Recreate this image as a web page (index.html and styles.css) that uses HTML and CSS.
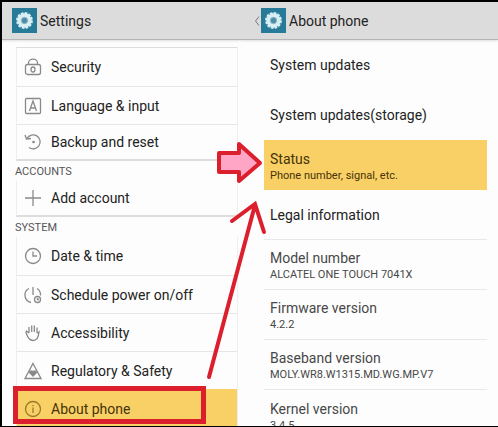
FILE: index.html
```html
<!DOCTYPE html>
<html lang="en">
<head>
  <meta charset="UTF-8">
  <meta name="viewport" content="width=device-width, initial-scale=1">
  <title>Settings - About phone</title>
  <link rel="stylesheet" href="styles.css">
</head>
<body>

  <svg class="defs" width="0" height="0" aria-hidden="true">
    <symbol id="gear" viewBox="0 0 25 25">
      <rect width="25" height="25" fill="#277b98"/>
      <circle cx="12.5" cy="12.5" r="7.2" fill="#d9eff5"/>
      <circle cx="12.5" cy="12.5" r="7.4" fill="none" stroke="#d9eff5" stroke-width="2" stroke-dasharray="2.7 1.17"/>
      <circle cx="12.5" cy="12.5" r="3.2" fill="#4d8da3" stroke="#8fbccb"/>
    </symbol>
  </svg>

  <main class="screens">
    <section class="screen">
      <header class="bar">
        <svg class="logo"><use href="#gear"/></svg>
        <h1>Settings</h1>
      </header>

      <nav class="settings">
        <div class="group group-top">
          <a class="row" href="#">
            <svg class="icon" viewBox="0 0 18 18"><rect x="1.5" y="6.5" width="15" height="10" rx="2"/><path d="M4.5 6.500V5a4.500 3.800 0 0 1 9 0v1.500"/><ellipse cx="9" cy="11.500" rx="2" ry="2.500"/></svg>
            <span>Security</span>
          </a>
          <a class="row" href="#">
            <svg class="icon" viewBox="0 0 18 18"><rect x="1.500" y="1.500" width="15" height="15" rx="1"/><path d="M5.500 14L9 4l3.500 10M6.500 11h5"/></svg>
            <span>Language &amp; input</span>
          </a>
          <a class="row" href="#">
            <svg class="icon" viewBox="0 0 18 18"><path d="M3 5.500A7 7 0 1 1 5 14.500M1 2l1.500 4 4.500-.5"/><circle class="fill" cx="9.500" cy="9" r=".7"/></svg>
            <span>Backup and reset</span>
          </a>
        </div>

        <h2>ACCOUNTS</h2>
        <div class="group">
          <a class="row" href="#">
            <svg class="icon" viewBox="0 0 18 18"><path d="M9 1v16M1 9h16"/></svg>
            <span>Add account</span>
          </a>
        </div>

        <h2>SYSTEM</h2>
        <div class="group">
          <a class="row" href="#">
            <svg class="icon" viewBox="0 0 18 18"><circle cx="9" cy="9" r="7.500"/><path d="M9 4.500V9h4"/></svg>
            <span>Date &amp; time</span>
          </a>
          <a class="row" href="#">
            <svg class="icon" viewBox="0 0 18 18"><path d="M9 1v8M5 2.500A7.500 7.500 0 0 0 7 16.500M13 2.500a7.500 7.500 0 0 1 3.500 7"/><circle cx="13.500" cy="13.500" r="3"/><path d="M13.500 12v1.500h1.500"/></svg>
            <span>Schedule power on/off</span>
          </a>
          <a class="row" href="#">
            <svg class="icon" viewBox="0 0 18 18"><path d="M5 9V3M7.700 8V1.500M10.300 8V1.500M13 9V3.500M5 9L2.500 7 2 8.500c1.500 5 3.500 8 7 8s5.500-2 6-8.500L13.500 9.500"/></svg>
            <span>Accessibility</span>
          </a>
          <a class="row" href="#">
            <svg class="icon" viewBox="0 0 18 18"><path d="M9 1.500L17 16.500H1z"/><path class="fill" d="M9 14L5.500 10.500Q6 8 9 9.500 12 8 12.500 10.500z"/></svg>
            <span>Regulatory &amp; Safety</span>
          </a>
          <a class="row selected" href="#">
            <svg class="icon" viewBox="0 0 18 18"><circle cx="9" cy="9" r="7.500"/><path d="M9 7.500v5.500M9 5v1.300"/></svg>
            <span>About phone</span>
          </a>
        </div>
      </nav>
    </section>

    <section class="screen">
      <header class="bar bar-about">
        <svg class="back" viewBox="0 0 6 12"><path d="M5 1.500L1.500 6 5 10.500"/></svg>
        <svg class="logo"><use href="#gear"/></svg>
        <h1>About phone</h1>
      </header>

      <div class="about">
        <a class="item" href="#">System updates</a>
        <a class="item" href="#">System updates(storage)</a>
        <a class="item detail selected" href="#">Status <small>Phone number, signal, etc.</small></a>
        <a class="item lined" href="#">Legal information</a>
        <div class="item detail info lined">Model number <small>ALCATEL ONE TOUCH 7041X</small></div>
        <div class="item detail info lined">Firmware version <small>4.2.2</small></div>
        <div class="item detail info lined">Baseband version <small>MOLY.WR8.W1315.MD.WG.MP.V7</small></div>
        <div class="item detail info">Kernel version <small>3.4.5</small></div>
      </div>
    </section>
  </main>

  <!-- red marks drawn over both screens -->
  <svg class="marks" viewBox="0 0 498 427" preserveAspectRatio="none" aria-hidden="true">
    <rect x="15.500" y="388.500" width="188" height="33" stroke-width="5"/>
    <path class="arrow" d="M219 153H239V144L260 163L239 181V172H219z" stroke-width="4"/>
    <path d="M209 377L255 205M232 221L255 204L264 232" stroke-width="4"/>
  </svg>

</body>
</html>
```
FILE: styles.css
```css
* {
  box-sizing: border-box;
}
body {
  margin: 0;
  font-family: Roboto, sans-serif;
  font-size: 14px;
  line-height: 18px;
  color: #222;
  background: #000;
}
a {
  color: inherit;
  text-decoration: none;
}
h1, h2 {
  margin: 0;
  font-weight: normal;
}
.defs {
  position: absolute;
}

.screens {
  display: grid;
  grid-template-columns: 238fr 258fr;
  height: 100vh;
  padding: 2px 0 1px 2px;
  overflow: hidden;
}
.screen {
  min-width: 0;
  overflow: hidden;
  background: #fdfdfd;
}

.bar {
  display: flex;
  align-items: center;
  gap: 3px;
  height: 38px;
  padding-left: 10px;
  background: #dcdcdc;
  border-bottom: 1px solid #b5b5b5;
  box-shadow: 0 1px 2px #ddd;
}
.bar-about {
  padding-left: 14px;
}
.bar h1 {
  font-size: 14px;
}
.logo {
  width: 25px;
  height: 25px;
}
.back {
  width: 6px;
  height: 12px;
  margin-right: -2px;
  fill: none;
  stroke: #777;
}

/* left screen */
.settings {
  padding: 7px 2px 0 14px;
}
.group {
  border-left: 1px solid #eee;
  border-right: 1px solid #eee;
  border-bottom: 2px solid #ddd;
}
.group-top {
  border-top: 1px solid #ddd;
}
.row {
  display: flex;
  align-items: center;
  gap: 9px;
  height: 38px;
  padding-left: 7px;
}
.row + .row {
  border-top: 1px solid #e6e6e6;
}
.group-top .row:last-child {
  height: 35px;
}
.row:only-child {
  height: 34px;
}
.settings h2 {
  margin-left: -1px;
  padding-top: 2px;
  font-size: 11px;
  color: #555;
}
.icon {
  width: 18px;
  height: 18px;
  fill: none;
  stroke: #8a8a8a;
  stroke-width: 1.3;
}
.icon .fill {
  fill: #8a8a8a;
}
.selected {
  color: #46330a;
  background: #f9d065;
}
.row.selected {
  border-color: #f9d065;
}
.selected .icon {
  stroke: #9a7a2c;
}

/* right screen */
.about {
  padding: 0 11px 0 24px;
}
.item {
  display: flex;
  flex-direction: column;
  justify-content: center;
  height: 50px;
  padding-left: 6px;
}
.item small {
  font-size: 11px;
  line-height: 16px;
}
.detail {
  padding-top: 3px;
}
.lined {
  border-bottom: 1px solid #e8e8e8;
}
.info {
  color: #484848;
}

.marks {
  position: absolute;
  top: 0;
  left: 0;
  width: 100%;
  height: 100%;
  fill: none;
  stroke: #dc1f2c;
  stroke-linecap: round;
  pointer-events: none;
}
.marks .arrow {
  fill: #ffa6c6;
  stroke-linejoin: round;
}
```
